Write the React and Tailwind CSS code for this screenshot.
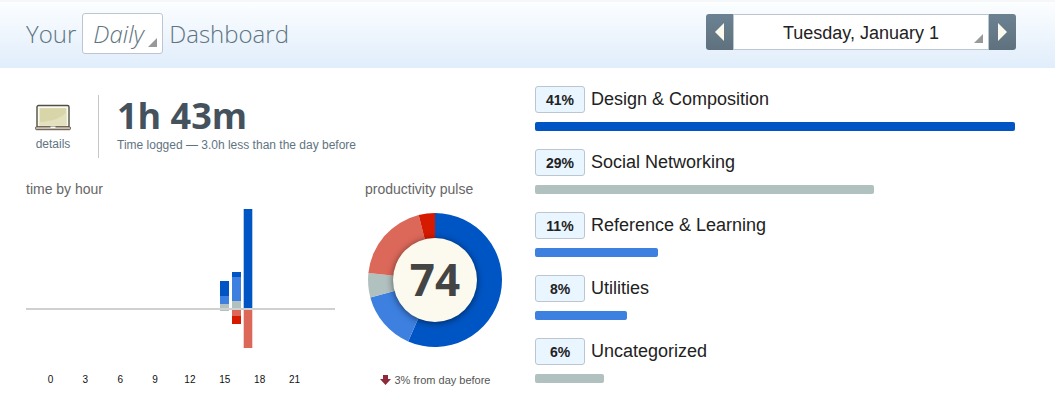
import React from "react";

const categories = [
  { percent: 41, name: "Design & Composition", width: 100, color: "bg-[#0055c4]" },
  { percent: 29, name: "Social Networking", width: 70.6, color: "bg-[#b1c1bf]" },
  { percent: 11, name: "Reference & Learning", width: 25.6, color: "bg-[#3d80e0]" },
  { percent: 8, name: "Utilities", width: 19.2, color: "bg-[#3d80e0]" },
  { percent: 6, name: "Uncategorized", width: 14.4, color: "bg-[#b1c1bf]" },
];

const hourBars = [
  { x: 194, y: 76, h: 15, fill: "#0055c4" },
  { x: 194, y: 91, h: 8, fill: "#3d80e0" },
  { x: 194, y: 99, h: 7, fill: "#b1c1bf" },
  { x: 206, y: 67, h: 5, fill: "#0055c4" },
  { x: 206, y: 72, h: 24, fill: "#3d80e0" },
  { x: 206, y: 96, h: 8, fill: "#b1c1bf" },
  { x: 206, y: 105, h: 6, fill: "#dc685a" },
  { x: 206, y: 111, h: 8, fill: "#d61a00" },
  { x: 217.7, y: 4, h: 100, fill: "#0055c4" },
  { x: 217.7, y: 105, h: 38, fill: "#dc685a" },
];

const slices = [
  { from: 0, to: 203.6, fill: "#0055c4" },
  { from: 203.6, to: 254.9, fill: "#3d80e0" },
  { from: 254.9, to: 276, fill: "#b1c1bf" },
  { from: 276, to: 345.9, fill: "#dc685a" },
  { from: 345.9, to: 360, fill: "#d61a00" },
];

function slicePath(from, to) {
  const point = (deg) => {
    const a = (deg * Math.PI) / 180;
    return `${70 + 67 * Math.sin(a)} ${70 - 67 * Math.cos(a)}`;
  };
  return `M70 70 L${point(from)} A67 67 0 ${to - from > 180 ? 1 : 0} 1 ${point(to)} Z`;
}

function Corner() {
  return (
    <svg className="pointer-events-none absolute right-[6px] bottom-[7px] h-[9px] w-[9px]" viewBox="0 0 9 9" aria-hidden="true">
      <path d="M9 0V9H0Z" fill="#999" />
    </svg>
  );
}

function Header() {
  return (
    <header className="flex h-[68px] items-start justify-between border-t-2 border-[#f5f7f9] bg-linear-to-b from-[#fcfeff] to-[#e0edfb] pr-[39px] pl-[26px]">
      <h1 className="flex items-center gap-[6px] pt-[11px] font-['Open_Sans',sans-serif] text-2xl font-light text-[#5f7481]">
        <span>Your</span>
        <span className="relative block">
          <select aria-label="Period" className="block h-[41px] w-[81px] appearance-none rounded-[3px] border border-[#bcc6d0] bg-white pl-[10px] font-light italic">
            <option>Daily</option>
          </select>
          <Corner />
        </span>
        <span>Dashboard</span>
      </h1>
      <div className="mt-3 flex h-9 w-[310px] overflow-hidden rounded-[3px]">
        <button type="button" aria-label="Previous day" className="flex w-[27px] items-center justify-center bg-linear-to-b from-[#6c8292] to-[#5f717e]">
          <svg className="h-[18px] w-[9px]" viewBox="0 0 9 18" aria-hidden="true"><path d="M9 0V18L0 9Z" fill="#fcfaee" /></svg>
        </button>
        <div className="relative flex-1">
          <select aria-label="Date" className="h-9 w-full appearance-none border border-[#bcc6d0] bg-white pt-px text-center text-lg text-[#222]">
            <option>Tuesday, January 1</option>
          </select>
          <Corner />
        </div>
        <button type="button" aria-label="Next day" className="flex w-[27px] items-center justify-center bg-linear-to-b from-[#6c8292] to-[#5f717e]">
          <svg className="h-[18px] w-[9px]" viewBox="0 0 9 18" aria-hidden="true"><path d="M0 0V18L9 9Z" fill="#fcfaee" /></svg>
        </button>
      </div>
    </header>
  );
}

function Summary() {
  return (
    <section className="flex h-[63px] text-xs text-[#5f7481]">
      <a href="#details" className="flex w-[73px] flex-col border-r border-[#c4c8cb] pt-[9px] pr-[18px] text-center leading-4">
        <svg className="mx-auto mb-[5px] h-[27px] w-9" viewBox="0 0 36 27" aria-hidden="true">
          <rect x="2" y="1.5" width="32" height="22" rx="1.5" fill="#fbfaf0" stroke="#4f4f44" strokeWidth="1.4" />
          <rect x="4.6" y="4.1" width="26.8" height="17.4" fill="#d8d5a8" />
          <path d="M31.4 8.5C26 14 17 17.5 4.6 18V21.5H31.4Z" fill="#e3e0bd" />
          <rect x="0.6" y="22.7" width="34.8" height="3" rx="1" fill="#c9bfb0" stroke="#5c5148" strokeWidth="1" />
          <path d="M15.5 22.5H20.5V24H15.5Z" fill="#fbfaf0" />
        </svg>
        details
      </a>
      <div className="pl-[18px]">
        <h2 className="font-['Open_Sans',sans-serif] text-4xl leading-[42px] font-bold text-[#44525d]">1h 43m</h2>
        <p className="leading-4">Time logged — 3.0h less than the day before</p>
      </div>
    </section>
  );
}

function HourChart() {
  return (
    <section className="w-[310px]">
      <h3 className="text-sm leading-4 text-[#666]">time by hour</h3>
      <svg className="mt-2 block h-[184px] w-[310px]" viewBox="0 0 310 184" role="img" aria-label="Time by hour">
        {hourBars.map((b) => (
          <rect key={`${b.x}-${b.y}`} x={b.x} y={b.y} width={b.x === 217.7 ? 8.6 : 9} height={b.h} fill={b.fill} />
        ))}
        <rect x="0" y="103" width="309" height="2" fill="#cfd1d0" />
        {[0, 3, 6, 9, 12, 15, 18, 21].map((hour, i) => (
          <text key={hour} x={24.5 + i * 34.857} y="178" textAnchor="middle" fontSize="10" fill="#111">{hour}</text>
        ))}
      </svg>
    </section>
  );
}

function Pulse() {
  return (
    <section className="w-[140px]">
      <h3 className="text-sm leading-4 text-[#666]">productivity pulse</h3>
      <div className="mt-[13px] grid place-items-center">
        <svg className="col-start-1 row-start-1 h-[140px] w-[140px]" viewBox="0 0 140 140" aria-hidden="true">
          {slices.map((s) => (
            <path key={s.from} d={slicePath(s.from, s.to)} fill={s.fill} />
          ))}
        </svg>
        <div className="col-start-1 row-start-1 flex h-[84px] w-[84px] items-center justify-center rounded-full bg-[#fcfaee] pb-[2px] font-['Open_Sans',sans-serif] text-[44px] leading-[44px] font-bold text-[#444] shadow-[0_1px_7px_rgba(0,0,0,0.55)]">
          74
        </div>
      </div>
      <p className="mt-[22px] flex items-center justify-center gap-1 text-[11px] leading-4 text-[#555]">
        <svg className="h-[10px] w-[11px]" viewBox="0 0 11 10" aria-hidden="true"><path d="M3 0H8V4H11L5.5 10L0 4H3Z" fill="#8f2a3a" /></svg>
        3% from day before
      </p>
    </section>
  );
}

function Categories() {
  return (
    <ul className="flex min-w-0 flex-1 flex-col gap-[18px] pt-[18px]">
      {categories.map((c) => (
        <li key={c.name}>
          <div className="flex gap-[6px]">
            <span className="h-[27px] w-[50px] rounded-[3px] border border-[#bcc6d0] bg-[#e9f5ff] text-center text-sm leading-[27px] font-bold text-[#222]">{c.percent}%</span>
            <span className="text-lg leading-[26px] text-[#222]">{c.name}</span>
          </div>
          <div className="mt-[9px]">
            <div className={`h-[9px] rounded-[2px] ${c.color}`} style={{ width: `${c.width}%` }} />
          </div>
        </li>
      ))}
    </ul>
  );
}

export default function App() {
  return (
    <div className="min-h-screen bg-white font-['Liberation_Sans',sans-serif]">
      <Header />
      <main className="flex pr-10 pl-[26px]">
        <div className="w-[509px] shrink-0 pt-[27px]">
          <Summary />
          <div className="mt-[23px] flex gap-[29px]">
            <HourChart />
            <Pulse />
          </div>
        </div>
        <Categories />
      </main>
    </div>
  );
}
